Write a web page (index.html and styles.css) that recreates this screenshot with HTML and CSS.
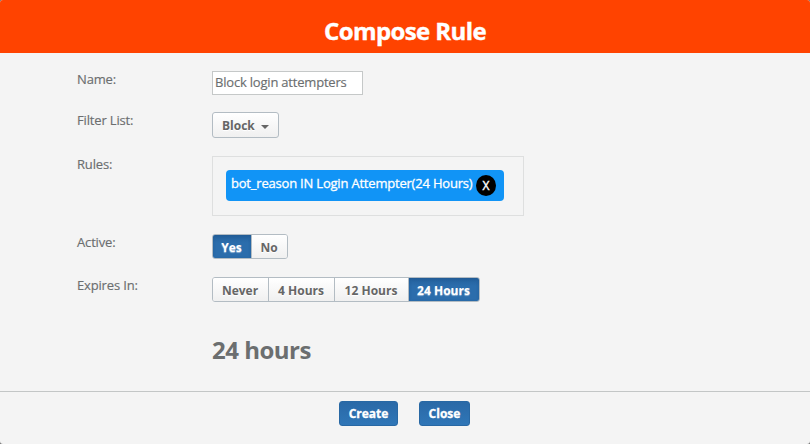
FILE: index.html
```html
<!DOCTYPE html>
<html lang="en">
<head>
<meta charset="utf-8">
<title>Compose Rule</title>
<link rel="stylesheet" href="styles.css">
</head>
<body>
<main class="dialog">
  <header class="header"><h1>Compose Rule</h1></header>
  <form class="form">
    <div class="row row-name"><label class="label" for="name">Name:</label><input class="input" id="name" type="text" value="Block login attempters"></div>
    <div class="row row-filter"><span class="label">Filter List:</span><button class="btn dropdown" type="button">Block<span class="caret"></span></button></div>
    <div class="row row-rules"><span class="label">Rules:</span>
      <div class="rules"><div class="chip"><span class="chip-text">bot_reason IN Login Attempter(24 Hours)</span><button class="remove" type="button">X</button></div></div>
    </div>
    <div class="row row-active"><span class="label">Active:</span>
      <div class="group"><button class="seg yes on" type="button">Yes</button><button class="seg no" type="button">No</button></div>
    </div>
    <div class="row row-expires"><span class="label">Expires In:</span>
      <div class="group"><button class="seg never" type="button">Never</button><button class="seg h4" type="button">4 Hours</button><button class="seg h12" type="button">12 Hours</button><button class="seg h24 on" type="button">24 Hours</button></div>
    </div>
    <h2 class="duration">24 hours</h2>
  </form>
  <footer class="footer"><button class="action create" type="button">Create</button><button class="action close" type="button">Close</button></footer>
</main>
</body>
</html>
```
FILE: styles.css
```css
* { box-sizing: border-box; }
body { margin: 0; background: #777; font-family: "Open Sans", sans-serif; font-size: 13px; color: #6b6e6f; }
button, input { font-family: inherit; font-size: 13px; margin: 0; }
.dialog { display: flex; flex-direction: column; width: 810px; height: 444px; background: #f4f4f4; border-radius: 3px; overflow: hidden; }
.header { height: 53px; background: #ff4300; text-align: center; padding-top: 14px; }
h1 { margin: 0; font-size: 24px; line-height: 34px; font-weight: 700; letter-spacing: -0.6px; -webkit-text-stroke: 0.4px #fff; color: #fff; }
.form { height: 338px; padding: 18px 0 0 77px; }
.row { display: flex; align-items: flex-start; }
.label { width: 135px; line-height: 16px; letter-spacing: -0.16px; -webkit-text-stroke: 0.15px; }
.row-name { height: 41px; }
.row-filter { height: 44px; }
.row-rules { height: 78px; }
.row-active { height: 43px; }
.row-expires { height: 56px; }
.input { width: 151px; height: 24px; border: 1px solid #c5c8c8; background: #fff; padding: 0 2px 2px; color: #6b6e6f; letter-spacing: -0.2px; -webkit-text-stroke: 0.15px; }
.btn, .seg { font-weight: 700; font-size: 12px; color: #666; background: linear-gradient(#fff, #f0f0f0); text-shadow: 0 1px 0 #fff; }
.dropdown { display: flex; align-items: center; width: 67px; height: 26px; border: 1px solid #b3bcc3; border-radius: 3px; padding: 1px 0 0 9px; }
.caret { border: 4px solid transparent; border-top-color: #666; border-bottom: 0; margin: 2px 0 0 6px; }
.rules { width: 312px; height: 60px; border: 1px solid #dedfdf; padding: 13px; }
.chip { display: flex; width: 278px; height: 31px; background: #1194f6; border-radius: 4px; padding: 5px; color: #fff; }
.chip-text { width: 245px; line-height: 16px; white-space: nowrap; letter-spacing: -0.2px; -webkit-text-stroke: 0.3px #fff; }
.remove { width: 20px; height: 21px; border: 0; border-radius: 50%; padding: 0; background: #000; color: #fff; font-size: 12px; -webkit-text-stroke: 0.4px #fff; }
.group { display: flex; height: 25px; border: 1px solid #b3bcc3; border-radius: 3px; overflow: hidden; }
.seg { border: 0; border-left: 1px solid #b3bcc3; padding: 2px 1px 0 0; white-space: nowrap; }
.seg:first-child { border-left: 0; }
.seg.on { background: linear-gradient(#24619d, #2b6dac 35%); color: #fff; text-shadow: 0 1px 1px #ffffff80; box-shadow: inset 0 1px 3px #1c528a80; }
.yes { width: 38px; }
.no { width: 36px; }
.never { width: 55px; }
.h4 { width: 66px; }
.h12 { width: 74px; }
.h24 { width: 71px; }
.duration { margin: 0 0 0 135px; font-size: 24px; line-height: 34px; font-weight: 700; letter-spacing: -0.5px; }
.footer { height: 53px; border-top: 1px solid #c3c6c6; padding: 9px 0 0 339px; display: flex; gap: 21px; }
.action { height: 25px; border: 1px solid #2868a4; border-radius: 3px; background: linear-gradient(#2a69a7, #2f76b7); color: #fff; font-weight: 700; font-size: 12px; padding: 0; -webkit-text-stroke: 0.3px #fff; }
.create { width: 59px; }
.close { width: 51px; }
```
